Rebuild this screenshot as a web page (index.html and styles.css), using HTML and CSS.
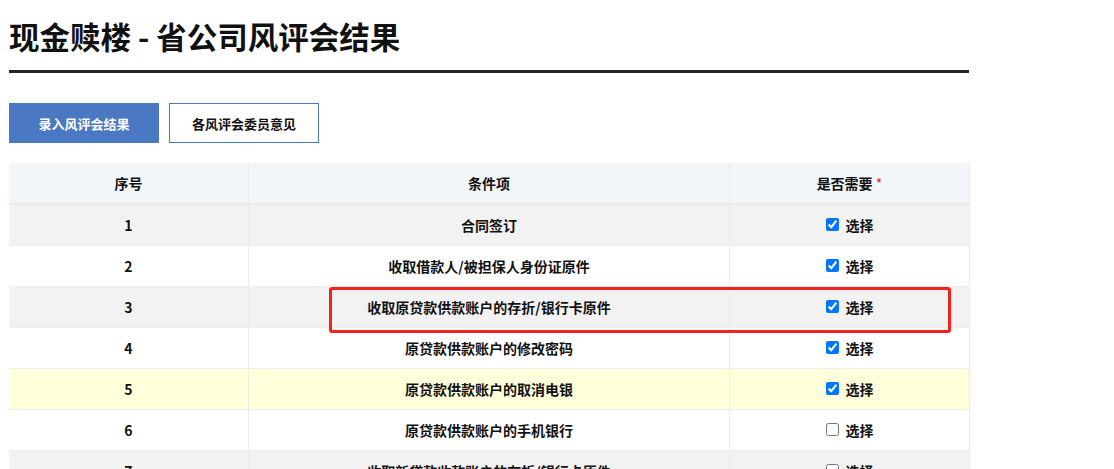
FILE: index.html
```html
<!DOCTYPE html>
<html lang="zh-CN">
<head>
    <meta charset="UTF-8">
    <title>现金赎楼 - 省公司风评会结果</title>
    <link rel="stylesheet" href="styles.css">
</head>
<body>
<div class="page">
    <h1 class="title">现金赎楼 - 省公司风评会结果</h1>

    <div class="actions">
        <button class="btn btn-primary">录入风评会结果</button>
        <button class="btn btn-outline">各风评会委员意见</button>
    </div>

    <div class="table-wrap">
        <table class="cond-table">
            <thead>
                <tr>
                    <th class="col-no">序号</th>
                    <th class="col-item">条件项</th>
                    <th class="col-need">是否需要 <span class="req">*</span></th>
                </tr>
            </thead>
            <tbody>
                <tr class="row-grey">
                    <td>1</td>
                    <td>合同签订</td>
                    <td><label class="pick"><input type="checkbox" checked> 选择</label></td>
                </tr>
                <tr>
                    <td>2</td>
                    <td>收取借款人/被担保人身份证原件</td>
                    <td><label class="pick"><input type="checkbox" checked> 选择</label></td>
                </tr>
                <tr class="row-grey">
                    <td>3</td>
                    <td>收取原贷款供款账户的存折/银行卡原件</td>
                    <td><label class="pick"><input type="checkbox" checked> 选择</label></td>
                </tr>
                <tr>
                    <td>4</td>
                    <td>原贷款供款账户的修改密码</td>
                    <td><label class="pick"><input type="checkbox" checked> 选择</label></td>
                </tr>
                <tr class="row-hover">
                    <td>5</td>
                    <td>原贷款供款账户的取消电银</td>
                    <td><label class="pick"><input type="checkbox" checked> 选择</label></td>
                </tr>
                <tr>
                    <td>6</td>
                    <td>原贷款供款账户的手机银行</td>
                    <td><label class="pick"><input type="checkbox"> 选择</label></td>
                </tr>
                <tr class="row-grey">
                    <td>7</td>
                    <td>收取新贷款收款账户的存折/银行卡原件</td>
                    <td><label class="pick"><input type="checkbox"> 选择</label></td>
                </tr>
            </tbody>
        </table>
        <div class="highlight"></div>
    </div>
</div>
</body>
</html>
```

FILE: styles.css
```css
body {
    margin: 0;
    font-family: "Noto Sans CJK SC", "Liberation Sans", sans-serif;
    color: #111;
    background: #fff;
}
.page {
    width: 960px;
    padding: 0 9px;
}
.title {
    margin: 0;
    padding: 14px 0 12px;
    font-size: 30.5px;
    line-height: 44px;
    font-weight: bold;
    border-bottom: 3px solid #222;
}
.actions {
    display: flex;
    gap: 10px;
    margin-top: 30px;
}
.btn {
    width: 150px;
    height: 40px;
    font-family: inherit;
    font-size: 13px;
    font-weight: bold;
    cursor: pointer;
}
.btn-primary {
    background: #4a78c2;
    border: 1px solid #4a78c2;
    color: #fff;
}
.btn-outline {
    background: #fff;
    border: 1px solid #4a78c2;
    color: #111;
}
.table-wrap {
    position: relative;
    margin-top: 20px;
}
.cond-table {
    width: 960px;
    border-collapse: collapse;
    table-layout: fixed;
}
.cond-table th,
.cond-table td {
    height: 40px;
    padding: 0;
    text-align: center;
    font-size: 14px;
    font-weight: bold;
    border: 1px solid #ececec;
    border-top: none;
    border-left: none;
}
.cond-table th {
    background: #f2f5fa;
    border-bottom: 2px solid #ebebeb;
}
.col-no { width: 239px; }
.col-item { width: 480px; }
.col-need { width: 239px; }
.req {
    color: #e02020;
    font-weight: normal;
}
.row-grey td {
    background: #f2f2f2;
}
.row-hover td {
    background: #ffffdc;
}
.pick {
    display: inline-flex;
    align-items: center;
    gap: 4px;
}
.pick input {
    width: 13px;
    height: 13px;
    margin: 0 3px 0 0;
}
.highlight {
    position: absolute;
    left: 320px;
    top: 124px;
    width: 616px;
    height: 40px;
    border: 3px solid #f5211a;
    border-radius: 3px;
    pointer-events: none;
}
```
